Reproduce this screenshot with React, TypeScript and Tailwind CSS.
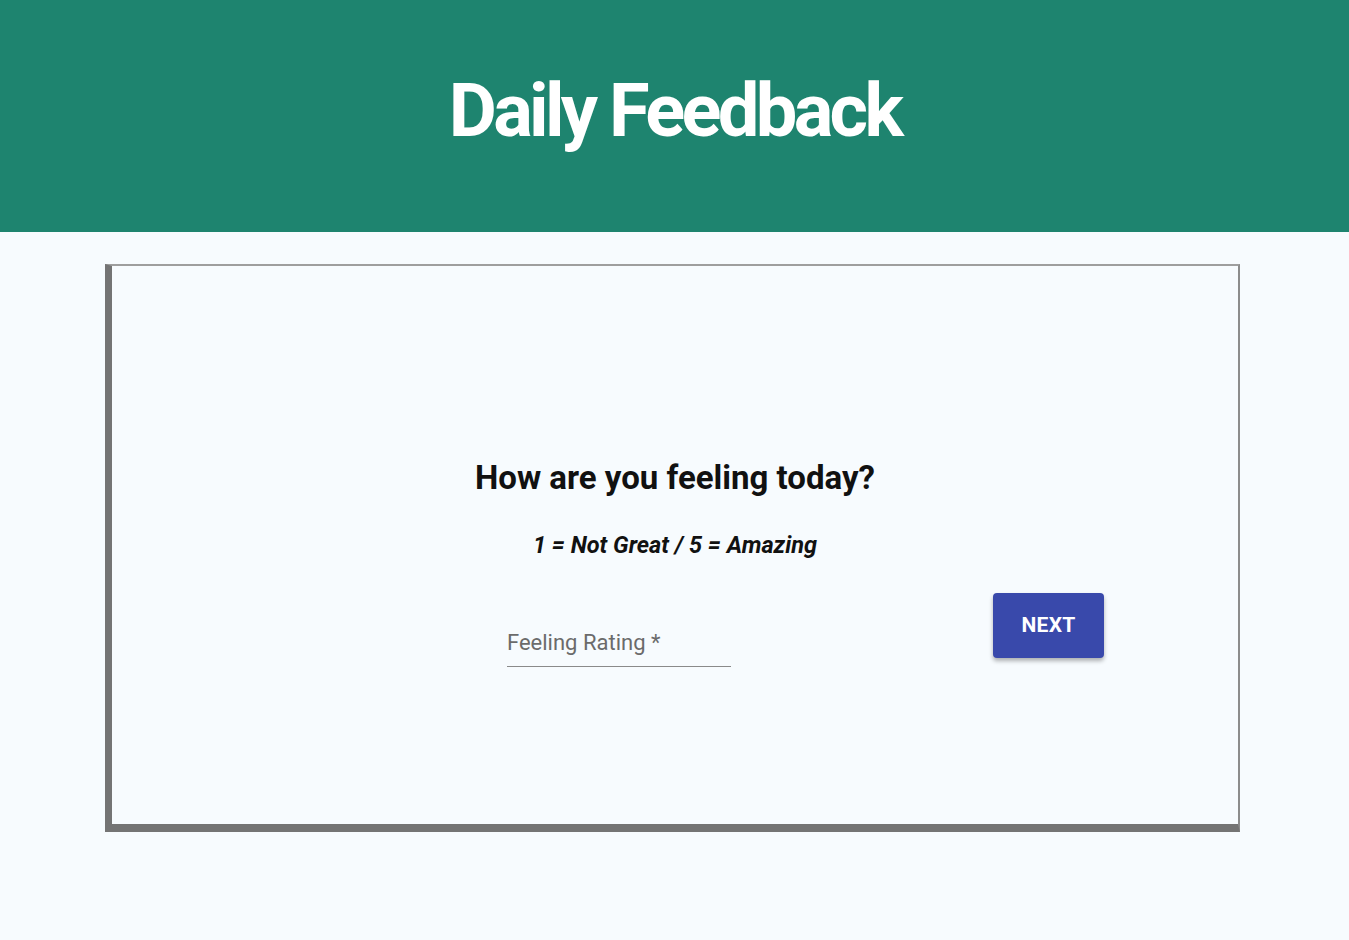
import React from "react";

export default function App() {
  return (
    <div className="min-h-[940px] w-full bg-[#f7fbfe]" style={{ fontFamily: "Roboto, 'Liberation Sans', sans-serif" }}>
      <header className="flex h-[232px] items-start justify-center bg-[#1e846f] pt-[66px]">
        <h1 className="font-['Roboto',sans-serif] text-[74px] font-bold leading-[90px] tracking-[-0.05em] text-white">
          Daily Feedback
        </h1>
      </header>
      <main className="px-[105px] pt-[32px] pr-[109px]">
        <div className="h-[568px] border-t-2 border-r-2 border-b-[8px] border-l-[7px] border-t-[#9e9e9e] border-r-[#8c8c8c] border-b-[#747474] border-l-[#747474] bg-[#f7fbfe]">
          <div className="flex flex-col items-center pt-[192px]">
            <h2 className="text-[33px] font-bold leading-[40px] text-[#111]">How are you feeling today?</h2>
            <p className="mt-[33px] text-[23.5px] font-bold italic leading-[28px] text-[#111]">1 = Not Great / 5 = Amazing</p>
          </div>
          <div className="mt-[34px] flex items-start pl-[395px]">
            <div className="mt-[36px] w-[224px] border-b border-[#8a8a8a] pb-[9px]">
              <span className="text-[22px] leading-[28px] text-[#6b6b6b]">Feeling Rating *</span>
            </div>
            <button className="ml-[262px] flex h-[65px] w-[111px] items-center justify-center rounded-[4px] bg-[#3949ab] text-[21px] font-bold tracking-[0.01em] text-white shadow-[0_3px_4px_rgba(0,0,0,0.3)]">
              NEXT
            </button>
          </div>
        </div>
      </main>
    </div>
  );
}
